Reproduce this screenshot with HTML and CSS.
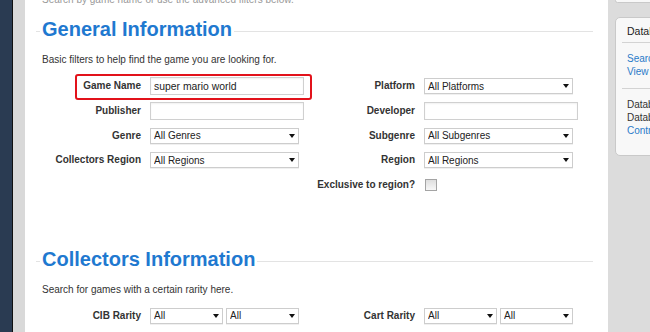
FILE: index.html
```html
<!DOCTYPE html>
<html lang="en">
<head>
    <meta charset="UTF-8">
    <meta name="viewport" content="width=device-width, initial-scale=1.0">
    <title>Advanced Search</title>
    <link rel="stylesheet" href="styles.css">
</head>
<body>
    <div id="page">
        <div id="edge"></div>

        <div id="main">
            <p class="crumb">Search by game name or use the advanced filters below.</p>

            <!-- 基本信息 -->
            <div class="section">
                <h2>General Information</h2>
                <p class="intro">Basic filters to help find the game you are looking for.</p>

                <div class="form">
                    <div class="label"><span class="mark"></span>Game Name</div>
                    <div class="ctrl"><input class="text" type="text" value="super mario world"></div>
                    <div class="label">Platform</div>
                    <div class="ctrl"><span class="select"><select><option>All Platforms</option></select></span></div>

                    <div class="label">Publisher</div>
                    <div class="ctrl"><input class="text" type="text"></div>
                    <div class="label">Developer</div>
                    <div class="ctrl"><input class="text" type="text"></div>

                    <div class="label">Genre</div>
                    <div class="ctrl"><span class="select"><select><option>All Genres</option></select></span></div>
                    <div class="label">Subgenre</div>
                    <div class="ctrl"><span class="select"><select><option>All Subgenres</option></select></span></div>

                    <div class="label">Collectors Region</div>
                    <div class="ctrl"><span class="select"><select><option>All Regions</option></select></span></div>
                    <div class="label">Region</div>
                    <div class="ctrl"><span class="select"><select><option>All Regions</option></select></span></div>

                    <div class="label"></div>
                    <div class="ctrl"></div>
                    <div class="label">Exclusive to region?</div>
                    <div class="ctrl"><input class="check" type="checkbox"></div>
                </div>
            </div>

            <!-- 收藏信息 -->
            <div class="section second">
                <h2>Collectors Information</h2>
                <p class="intro">Search for games with a certain rarity here.</p>

                <div class="form">
                    <div class="label">CIB Rarity</div>
                    <div class="ctrl pair">
                        <span class="select small"><select><option>All</option></select></span>
                        <span class="select small"><select><option>All</option></select></span>
                    </div>
                    <div class="label">Cart Rarity</div>
                    <div class="ctrl pair">
                        <span class="select small"><select><option>All</option></select></span>
                        <span class="select small"><select><option>All</option></select></span>
                    </div>
                </div>
            </div>
        </div>

        <div id="side">
            <div class="side-box top"></div>
            <div class="side-box">
                <div class="side-head">Database</div>
                <ul class="side-list">
                    <li><a href="#">Search Games</a></li>
                    <li><a href="#">View Recent Additions</a></li>
                </ul>
                <ul class="side-list last">
                    <li>Database Games: 12,034</li>
                    <li>Database Updated: Today</li>
                    <li><a href="#">Contribute</a></li>
                </ul>
            </div>
        </div>
    </div>
</body>
</html>
```

FILE: styles.css
```css
html, body {
    margin: 0;
    padding: 0;
    height: 100%;
    overflow: hidden;
}

body {
    font-family: "Liberation Sans", Arial, sans-serif;
    font-size: 10px;
    color: #333;
    background: #dcdcdc;
}

#page {
    display: flex;
    height: 100%;
}

/* 左边的深色条 */
#edge {
    width: 12px;
    flex: none;
    background: #2a3b52;
    border-right: 1px solid #101010;
    box-shadow: 12px 0 0 #d9d9d9;
    margin-right: 12px;
}

#main {
    flex: 1;
    background: #fff;
    padding: 0 15px 0 11px;
}

.crumb {
    margin: -7px 0 0 6px;
    line-height: 13px;
    color: #999;
}

/* 标题栏 + 横线 */
.section {
    border-top: 1px solid #e3e3e3;
    margin-top: 25px;
}
.section.second {
    margin-top: 64px;
}

.section h2 {
    width: fit-content;
    margin: -15px 0 0 4px;
    padding: 0 2px;
    background: #fff;
    font-size: 20px;
    line-height: 24px;
    font-weight: bold;
    color: #1f79d0;
}

.intro {
    margin: 12px 0 0 6px;
    line-height: 13px;
}

.form {
    display: grid;
    grid-template-columns: 108px 154px 120px 154px;
    grid-auto-rows: 24.7px;
    margin: 8px 0 0 6px;
}
.second .form {
    margin-top: 7px;
}

.label {
    position: relative;
    display: flex;
    align-items: center;
    justify-content: flex-end;
    padding-right: 9px;
    padding-bottom: 1px;
    font-weight: bold;
    color: #333;
    white-space: nowrap;
}

/* 红色框 */
.mark {
    position: absolute;
    left: 33px;
    top: 0;
    width: 237px;
    height: 26px;
    box-sizing: border-box;
    border: 2px solid #e2121b;
    border-radius: 3px;
}

.ctrl {
    display: flex;
    align-items: center;
}
.ctrl.pair {
    gap: 3px;
}

.text {
    box-sizing: border-box;
    width: 154px;
    height: 18px;
    margin: 0;
    padding: 0 3px;
    border: 1px solid #d0d0d0;
    box-shadow: inset 0 1px 2px rgba(0, 0, 0, 0.06);
    font-family: "Liberation Sans", Arial, sans-serif;
    font-size: 10.4px;
    color: #222;
    outline: none;
}

.select {
    position: relative;
    display: block;
    width: 149px;
    height: 16px;
}
.select.small {
    width: 73px;
}
.select select {
    appearance: none;
    box-sizing: border-box;
    width: 100%;
    height: 16px;
    margin: 0;
    padding: 0 0 0 3px;
    border: 1px solid #cdcdcd;
    border-radius: 0;
    background: #fff;
    box-shadow: 0 1px 0 #f0f0f0;
    font-family: "Liberation Sans", Arial, sans-serif;
    font-size: 10px;
    color: #222;
}
.select::after {
    content: "";
    position: absolute;
    right: 4px;
    top: 6px;
    border-left: 3px solid transparent;
    border-right: 3px solid transparent;
    border-top: 4px solid #111;
    pointer-events: none;
}

.check {
    appearance: none;
    width: 12px;
    height: 12px;
    margin: 0 0 0 1px;
    border: 1px solid #a4a4a4;
    background: linear-gradient(#dedede, #f7f7f7);
}

/* 右边栏 */
#side {
    width: 35px;
    flex: none;
    padding-left: 7px;
    overflow: hidden;
}

.side-box {
    width: 190px;
    background: #f8f8f8;
    border: 1px solid #c9c9c9;
    border-radius: 5px;
    margin-top: 14px;
    padding-bottom: 18px;
}
.side-box.top {
    height: 3px;
    margin-top: -2px;
    padding: 0;
}

.side-head {
    margin-left: 6px;
    padding: 7px 0 4px 5px;
    line-height: 13px;
    font-size: 10.5px;
    color: #222;
    border-bottom: 1px solid #d3d3d3;
}

.side-list {
    list-style: none;
    margin: 0 0 0 6px;
    padding: 9px 0 10px 5px;
    line-height: 13px;
    border-bottom: 1px solid #d3d3d3;
    white-space: nowrap;
}
.side-list.last {
    border-bottom: none;
    padding-bottom: 0;
}
.side-list a {
    color: #2b7bc9;
    text-decoration: none;
}
```
